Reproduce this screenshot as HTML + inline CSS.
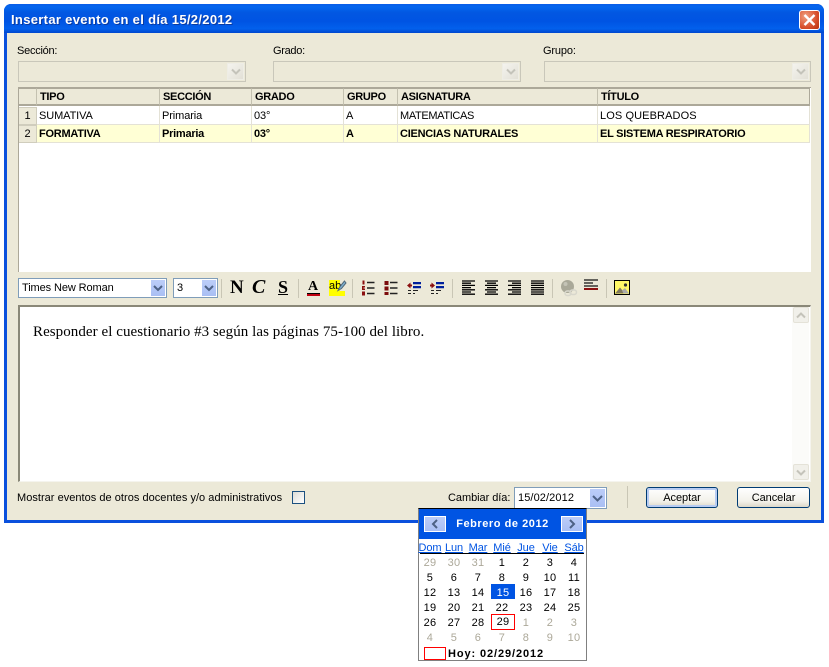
<!DOCTYPE html>
<html><head><meta charset="utf-8"><style>
html,body{margin:0;padding:0;background:#fff;width:829px;height:667px;overflow:hidden}
body{font-family:"Liberation Sans",sans-serif;font-size:11px;color:#000;position:relative}
div{position:absolute;box-sizing:border-box}
.t{white-space:nowrap;line-height:14px;letter-spacing:.1px}
.dis{background:#ECE9D8;border:1px solid #c9c7ba;height:21px}
.darr{position:absolute;right:1px;top:1px;width:17px;height:17px;background:linear-gradient(135deg,#f4f3ee,#e2e0d6);border:1px solid #eeede5}
.hc{top:88px;height:18px;background:#ECE9D8;border-right:1px solid #c4c1b0;border-bottom:2px solid #aca899;border-top:1px solid #aca899;font-weight:bold;line-height:17px;padding-left:3px;letter-spacing:-.3px}
.c{height:18px;border-right:1px solid #e4e2d6;border-bottom:1px solid #e4e2d6;line-height:19px;padding-left:2px;white-space:nowrap;letter-spacing:-.1px}
.r1{top:106px;height:19px;line-height:21px}
.r2{font-weight:bold;background:#FFFFD5;letter-spacing:-.25px}
.rn{left:19px;width:18px;background:#ECE9D8;border:1px solid #d0cdbd;border-left:0;text-align:center;line-height:17px;height:18px}
.sep{top:279px;width:1px;height:19px;background:#c9c6b5}
.btn{top:487px;height:21px;border:1px solid #003c74;border-radius:3px;background:linear-gradient(#fff,#f2f1ea 70%,#dcd8c8);text-align:center;line-height:20px;letter-spacing:-.05px}
.d{width:24px;height:15px;text-align:center;line-height:15px;font-size:11px;letter-spacing:.3px}
.g{color:#aca899}
.h{width:24px;top:541px;height:14px;text-align:center;color:#0054e3;text-decoration:underline;line-height:14px;letter-spacing:-.1px}
.blu{background:linear-gradient(#bccdf8,#a9bff4);border:1px solid #fff}
svg{position:absolute;overflow:visible}
</style></head><body>

<!-- window -->
<div style="left:4px;top:4px;width:820px;height:519px;background:#0a50dd;border-radius:7px 7px 0 0"></div>
<div style="left:4px;top:4px;width:820px;height:29px;border-radius:7px 7px 0 0;background:linear-gradient(#0a5de8 0,#0466ee 10%,#0257e2 30%,#0054e3 60%,#0260ec 85%,#0048cf 100%)"></div>
<div style="left:7px;top:33px;width:814px;height:487px;background:#ECE9D8"></div>
<div class="t" style="left:11px;top:13px;color:#fff;font-weight:bold;font-size:13px;letter-spacing:.32px;text-shadow:1px 1px 0 #0a3aa0">Insertar evento en el día 15/2/2012</div>
<div style="left:799px;top:10px;width:21px;height:20px;border:1px solid #fff;border-radius:3px;background:radial-gradient(circle at 30% 30%,#f0a080,#d8502c 60%,#b8300c)"></div>
<svg style="left:799px;top:10px" width="21" height="20"><path d="M5.5 5 L15.5 15 M15.5 5 L5.5 15" stroke="#fff" stroke-width="2.4"/></svg>

<!-- filters -->
<div class="t" style="left:17px;top:44px;letter-spacing:-.25px">Sección:</div>
<div class="t" style="left:273px;top:44px;letter-spacing:-.3px">Grado:</div>
<div class="t" style="left:543px;top:44px;letter-spacing:-.15px">Grupo:</div>
<div class="dis" style="left:18px;top:61px;width:228px"><div class="darr"></div><svg style="top:6px;left:212px" width="10" height="8"><path d="M1 1.5L5 5.5L9 1.5" fill="none" stroke="#c4c3ba" stroke-width="2"/></svg></div>
<div class="dis" style="left:273px;top:61px;width:248px"><div class="darr"></div><svg style="top:6px;left:232px" width="10" height="8"><path d="M1 1.5L5 5.5L9 1.5" fill="none" stroke="#c4c3ba" stroke-width="2"/></svg></div>
<div class="dis" style="left:544px;top:61px;width:267px"><div class="darr"></div><svg style="top:6px;left:251px" width="10" height="8"><path d="M1 1.5L5 5.5L9 1.5" fill="none" stroke="#c4c3ba" stroke-width="2"/></svg></div>

<!-- grid -->
<div style="left:18px;top:87px;width:793px;height:185px;background:#fff;border-left:1px solid #aca899;border-top:1px solid #aca899"></div>
<div class="hc" style="left:19px;width:18px"></div>
<div class="hc" style="left:37px;width:123px">TIPO</div>
<div class="hc" style="left:160px;width:92px">SECCIÓN</div>
<div class="hc" style="left:252px;width:92px">GRADO</div>
<div class="hc" style="left:344px;width:54px">GRUPO</div>
<div class="hc" style="left:398px;width:200px">ASIGNATURA</div>
<div class="hc" style="left:598px;width:212px;border-right:1px solid #aca899">TÍTULO</div>

<div class="rn" style="top:107px">1</div>
<div class="c r1" style="left:37px;width:123px">SUMATIVA</div>
<div class="c r1" style="left:160px;width:92px">Primaria</div>
<div class="c r1" style="left:252px;width:92px">03°</div>
<div class="c r1" style="left:344px;width:54px">A</div>
<div class="c r1" style="left:398px;width:200px;letter-spacing:-.35px">MATEMATICAS</div>
<div class="c r1" style="left:598px;width:212px;letter-spacing:.1px">LOS QUEBRADOS</div>

<div class="rn" style="top:125px">2</div>
<div class="c r2" style="left:37px;top:125px;width:123px">FORMATIVA</div>
<div class="c r2" style="left:160px;top:125px;width:92px">Primaria</div>
<div class="c r2" style="left:252px;top:125px;width:92px">03°</div>
<div class="c r2" style="left:344px;top:125px;width:54px">A</div>
<div class="c r2" style="left:398px;top:125px;width:200px">CIENCIAS NATURALES</div>
<div class="c r2" style="left:598px;top:125px;width:212px">EL SISTEMA RESPIRATORIO</div>

<!-- toolbar selects -->
<div style="left:18px;top:278px;width:149px;height:20px;background:#fff;border:1px solid #7f9db9"></div>
<div class="t" style="left:22px;top:281px;letter-spacing:-.1px">Times New Roman</div>
<div class="blu" style="left:150px;top:279px;width:16px;height:18px"></div>
<svg style="left:153px;top:285px" width="10" height="8"><path d="M1 1L5 5L9 1" fill="none" stroke="#4d6185" stroke-width="2"/></svg>
<div style="left:173px;top:278px;width:45px;height:20px;background:#fff;border:1px solid #7f9db9"></div>
<div class="t" style="left:177px;top:281px">3</div>
<div class="blu" style="left:201px;top:279px;width:16px;height:18px"></div>
<svg style="left:204px;top:285px" width="10" height="8"><path d="M1 1L5 5L9 1" fill="none" stroke="#4d6185" stroke-width="2"/></svg>
<div class="sep" style="left:221px"></div>

<div class="t" style="left:230px;top:277px;font-family:'Liberation Serif',serif;font-weight:bold;font-size:19px;line-height:21px;letter-spacing:0">N</div>
<div class="t" style="left:252px;top:277px;font-family:'Liberation Serif',serif;font-weight:bold;font-style:italic;font-size:20px;line-height:21px;letter-spacing:0">C</div>
<div class="t" style="left:278px;top:277px;font-family:'Liberation Serif',serif;font-weight:bold;font-size:18px;line-height:21px;letter-spacing:0;text-decoration:underline">S</div>
<div class="sep" style="left:298px"></div>
<div class="t" style="left:308px;top:279px;font-family:'Liberation Serif',serif;font-weight:bold;font-size:14px;line-height:16px;letter-spacing:0">A</div>
<div style="left:307px;top:293px;width:13px;height:3px;background:#c00010;border-top:1px solid #000"></div>
<div style="left:329px;top:280px;width:11px;height:16px;background:#ffff00"></div>
<div style="left:329px;top:291px;width:16px;height:5px;background:#ffff00"></div>
<div class="t" style="left:329px;top:280px;font-size:11px;line-height:12px;letter-spacing:0">ab</div>
<svg style="left:337px;top:280px" width="9" height="12"><path d="M7.5 1L3 6.5L1 10.5L4.5 8.5L9 3z" fill="#7fb0d0" stroke="#506878"/></svg>
<div class="sep" style="left:352px"></div>

<!-- list icons -->
<svg style="left:361px;top:280px" width="14" height="16"><path d="M1.5 .5h2v4h-2zM1 6h3v1.5H2.5v1H4V10H1zM1 11.5h3v4H1z" fill="#8b1010"/><path d="M6 2.5h7.5M6 8h7.5M6 13.5h7.5" stroke="#222" stroke-width="1.6"/></svg>
<svg style="left:384px;top:280px" width="14" height="16"><path d="M.5 1h4v4h-4zM.5 6.5h4v4h-4zM.5 12h4v3h-4z" fill="#7c0c0c"/><path d="M6 2.5h7.5M6 8h7.5M6 13.5h7.5" stroke="#222" stroke-width="1.6"/></svg>
<svg style="left:407px;top:281px" width="15" height="14"><path d="M0 4.5L3.5 1.5v2h1.5v2H3.5v2z" fill="#8b1010"/><path d="M6 1h8v2.2H6zM6 5h8v2.2H6z" fill="#00209c"/><path d="M1 9.5h3M6 9.5h5M1 12.5h3M6 12.5h2" stroke="#222"/></svg>
<svg style="left:430px;top:281px" width="15" height="14"><path d="M5 4.5L1.5 1.5v2H0v2h1.5v2z" fill="#8b1010"/><path d="M6 1h8v2.2H6zM6 5h8v2.2H6z" fill="#00209c"/><path d="M1 9.5h3M6 9.5h5M1 12.5h3M6 12.5h2" stroke="#222"/></svg>
<div class="sep" style="left:452px"></div>

<!-- align icons -->
<svg style="left:462px;top:280px" width="13" height="15"><path d="M0 1h13M0 3.2h9M0 5.4h13M0 7.6h9M0 9.8h13M0 12h9M0 14.2h13" stroke="#000" stroke-width="1.3"/></svg>
<svg style="left:485px;top:280px" width="13" height="15"><path d="M0 1h13M2 3.2h9M0 5.4h13M2 7.6h9M0 9.8h13M2 12h9M0 14.2h13" stroke="#000" stroke-width="1.3"/></svg>
<svg style="left:508px;top:280px" width="13" height="15"><path d="M0 1h13M4 3.2h9M0 5.4h13M4 7.6h9M0 9.8h13M4 12h9M0 14.2h13" stroke="#000" stroke-width="1.3"/></svg>
<svg style="left:531px;top:280px" width="13" height="15"><path d="M0 1h13M0 3.2h13M0 5.4h13M0 7.6h13M0 9.8h13M0 12h13M0 14.2h13" stroke="#000" stroke-width="1.3"/></svg>
<div class="sep" style="left:552px"></div>

<!-- link / hr -->
<svg style="left:560px;top:279px" width="18" height="18"><circle cx="7.5" cy="7.5" r="6.5" fill="#a9a898"/><circle cx="5.5" cy="5" r="2" fill="#c4c3b6"/><rect x="5" y="12" width="6" height="4.5" rx="2.2" fill="none" stroke="#d8d7cc" stroke-width="1.5"/><rect x="10" y="11" width="6.5" height="4.5" rx="2.2" fill="none" stroke="#d8d7cc" stroke-width="1.5"/></svg>
<svg style="left:584px;top:279px" width="14" height="12"><path d="M0 1h14M0 4h9M0 7h14" stroke="#111" stroke-width="1.2"/><path d="M0 10h14" stroke="#8b1010" stroke-width="2"/></svg>
<div class="sep" style="left:606px"></div>
<svg style="left:614px;top:280px" width="16" height="15"><rect x=".5" y=".5" width="15" height="14" fill="#fff868" stroke="#000"/><circle cx="11.5" cy="5" r="1.6" fill="#333"/><path d="M1 13.5L6 7.5L11 13.5z" fill="#807860"/><path d="M8 10.5L11 8L15 13.5H9.5z" fill="#aaa"/></svg>

<!-- editor -->
<div style="left:18px;top:305px;width:793px;height:177px;background:#fff;border-left:2px solid #8a8878;border-top:2px solid #8a8878;border-right:1px solid #f5f4ee;border-bottom:1px solid #f5f4ee"></div>
<div class="t" style="left:33px;top:323px;font-family:'Liberation Serif',serif;font-size:15px;line-height:18px;letter-spacing:.06px">Responder el cuestionario #3 según las páginas 75-100 del libro.</div>
<div style="left:792px;top:307px;width:17px;height:174px;background:#fbfbf9"></div>
<div style="left:793px;top:307px;width:16px;height:16px;background:#f1f0ea;border:1px solid #e4e2d8;border-radius:2px"></div>
<svg style="left:796px;top:312px" width="10" height="7"><path d="M1 5.5L5 1.5L9 5.5" fill="none" stroke="#c4c3ba" stroke-width="2"/></svg>
<div style="left:793px;top:464px;width:16px;height:16px;background:#f1f0ea;border:1px solid #e4e2d8;border-radius:2px"></div>
<svg style="left:796px;top:469px" width="10" height="7"><path d="M1 1.5L5 5.5L9 1.5" fill="none" stroke="#c4c3ba" stroke-width="2"/></svg>

<!-- bottom row -->
<div class="t" style="left:17px;top:491px;letter-spacing:.03px">Mostrar eventos de otros docentes y/o administrativos</div>
<div style="left:292px;top:491px;width:13px;height:13px;border:1px solid #1c5180;background:linear-gradient(135deg,#dcdcd7,#fff)"></div>
<div class="t" style="left:448px;top:491px;letter-spacing:-.05px">Cambiar día:</div>
<div style="left:514px;top:487px;width:93px;height:22px;background:#fff;border:1px solid #7f9db9"></div>
<div class="t" style="left:518px;top:491px;letter-spacing:.1px">15/02/2012</div>
<div class="blu" style="left:589px;top:488px;width:17px;height:20px"></div>
<svg style="left:592px;top:495px" width="11" height="8"><path d="M1 1L5.5 5.5L10 1" fill="none" stroke="#4d6185" stroke-width="2"/></svg>
<div style="left:627px;top:486px;width:1px;height:22px;background:#c9c6b5"></div>
<div class="btn" style="left:646px;width:72px;box-shadow:inset 0 0 0 2px #b8ccf2">Aceptar</div>
<div class="btn" style="left:737px;width:73px">Cancelar</div>

<!-- calendar -->
<div style="left:418px;top:508px;width:169px;height:153px;background:#fff;border:1px solid #808080;border-top:1px solid #000"></div>
<div style="left:419px;top:509px;width:167px;height:30px;background:#0054e3"></div>
<div class="t" style="left:419px;top:517px;width:167px;text-align:center;color:#fff;font-weight:bold;letter-spacing:.55px">Febrero de 2012</div>
<div class="blu" style="left:424px;top:516px;width:22px;height:16px"></div>
<svg style="left:431px;top:519px" width="8" height="10"><path d="M6 1L2 5L6 9" fill="none" stroke="#4d6185" stroke-width="2"/></svg>
<div class="blu" style="left:561px;top:516px;width:22px;height:16px"></div>
<svg style="left:568px;top:519px" width="8" height="10"><path d="M2 1L6 5L2 9" fill="none" stroke="#4d6185" stroke-width="2"/></svg>

<div class="h" style="left:418px">Dom</div><div class="h" style="left:442px">Lun</div><div class="h" style="left:466px">Mar</div><div class="h" style="left:490px">Mié</div><div class="h" style="left:514px">Jue</div><div class="h" style="left:538px">Vie</div><div class="h" style="left:562px">Sáb</div>
<div style="left:420px;top:553px;width:164px;height:1px;background:#000"></div>

<div class="d g" style="left:418px;top:556px">29</div><div class="d g" style="left:442px;top:556px">30</div><div class="d g" style="left:466px;top:556px">31</div><div class="d" style="left:490px;top:556px">1</div><div class="d" style="left:514px;top:556px">2</div><div class="d" style="left:538px;top:556px">3</div><div class="d" style="left:562px;top:556px">4</div>
<div class="d" style="left:418px;top:571px">5</div><div class="d" style="left:442px;top:571px">6</div><div class="d" style="left:466px;top:571px">7</div><div class="d" style="left:490px;top:571px">8</div><div class="d" style="left:514px;top:571px">9</div><div class="d" style="left:538px;top:571px">10</div><div class="d" style="left:562px;top:571px">11</div>
<div class="d" style="left:418px;top:586px">12</div><div class="d" style="left:442px;top:586px">13</div><div class="d" style="left:466px;top:586px">14</div><div class="d" style="left:491px;top:584px;height:15px;line-height:18px;background:#0054e3;color:#fff">15</div><div class="d" style="left:514px;top:586px">16</div><div class="d" style="left:538px;top:586px">17</div><div class="d" style="left:562px;top:586px">18</div>
<div class="d" style="left:418px;top:601px">19</div><div class="d" style="left:442px;top:601px">20</div><div class="d" style="left:466px;top:601px">21</div><div class="d" style="left:490px;top:601px">22</div><div class="d" style="left:514px;top:601px">23</div><div class="d" style="left:538px;top:601px">24</div><div class="d" style="left:562px;top:601px">25</div>
<div class="d" style="left:418px;top:616px">26</div><div class="d" style="left:442px;top:616px">27</div><div class="d" style="left:466px;top:616px">28</div><div class="d" style="left:491px;top:614px;height:16px;border:1px solid #f00;line-height:15px">29</div><div class="d g" style="left:514px;top:616px">1</div><div class="d g" style="left:538px;top:616px">2</div><div class="d g" style="left:562px;top:616px">3</div>
<div class="d g" style="left:418px;top:631px">4</div><div class="d g" style="left:442px;top:631px">5</div><div class="d g" style="left:466px;top:631px">6</div><div class="d g" style="left:490px;top:631px">7</div><div class="d g" style="left:514px;top:631px">8</div><div class="d g" style="left:538px;top:631px">9</div><div class="d g" style="left:562px;top:631px">10</div>

<div style="left:424px;top:647px;width:22px;height:13px;border:1px solid #f00"></div>
<div class="t" style="left:448px;top:647px;font-weight:bold;letter-spacing:.9px">Hoy: 02/29/2012</div>
</body></html>
